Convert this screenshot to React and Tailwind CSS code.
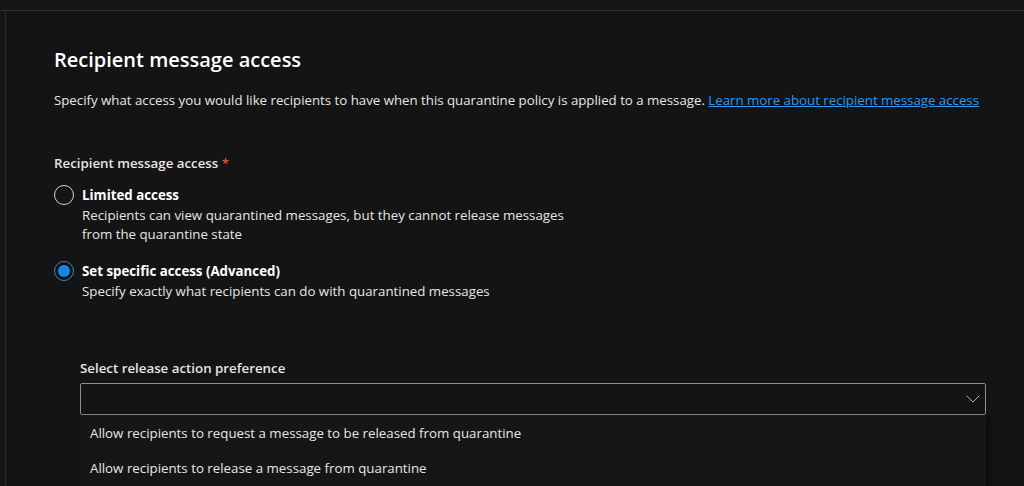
import { ChevronDown } from "lucide-react";

const font = { fontFamily: '"Segoe UI", "Open Sans", "Noto Sans", sans-serif' };

const Radio = ({ checked }) => (
  <span
    className={`mt-[1px] flex h-5 w-5 shrink-0 items-center justify-center rounded-full border ${
      checked ? "border-[#2b88d8]" : "border-[#d6d6d6]"
    }`}
  >
    {checked && <span className="h-[12px] w-[12px] rounded-full bg-[#1a86e0]" />}
  </span>
);

const Option = ({ checked, title, children }) => (
  <div className="flex gap-2">
    <Radio checked={checked} />
    <div>
      <div className="text-[13.3px] font-bold leading-[22px] text-white">{title}</div>
      <div className="text-[13.3px] leading-[19px] text-[#e6e6e6]">{children}</div>
    </div>
  </div>
);

export default function App() {
  return (
    <div
      className="h-[486px] w-[1024px] overflow-hidden bg-[#141414] text-white"
      style={font}
    >
      <div className="h-[11px] border-b border-[#2e2e2e] bg-[#151515]" />
      <div className="flex h-full">
        <div className="ml-[5px] w-px bg-[#2a2a2a]" />
        <div className="flex-1 pl-[48px] pr-[38px] pt-[35px]">
          <h1 className="text-[20px] font-semibold leading-[28px]">Recipient message access</h1>
          <p className="mt-[16px] whitespace-nowrap text-[13.25px] leading-[20px] text-[#e6e6e6]">
            Specify what access you would like recipients to have when this quarantine policy is
            applied to a message.{" "}
            <a href="#" className="text-[#2899f5] underline">
              Learn more about recipient message access
            </a>
          </p>

          <div className="mt-[43px] text-[13.3px] font-semibold leading-[20px] text-[#e6e6e6]">
            Recipient message access <span className="text-[#e5533d]">*</span>
          </div>

          <div className="mt-[11px] flex flex-col gap-[16px]">
            <Option checked={false} title="Limited access">
              Recipients can view quarantined messages, but they cannot release messages
              <br />
              from the quarantine state
            </Option>
            <Option checked title="Set specific access (Advanced)">
              Specify exactly what recipients can do with quarantined messages
            </Option>
          </div>

          <div className="ml-[26px] mt-[57px]">
            <div className="text-[13.3px] font-semibold leading-[20px] text-[#e6e6e6]">
              Select release action preference
            </div>
            <div className="mt-[5px] flex h-[32px] items-center justify-end rounded-[2px] border border-[#8f8f8f]">
              <ChevronDown size={24} strokeWidth={1} className="text-[#8fb4d6]" />
            </div>
            <div className="bg-[#161616] pt-[1px] shadow-[2px_2px_6px_rgba(0,0,0,0.6)]">
              <div className="flex h-[35px] items-center px-[10px] text-[13.3px] text-[#e6e6e6]">
                Allow recipients to request a message to be released from quarantine
              </div>
              <div className="flex h-[35px] items-center px-[10px] text-[13.3px] text-[#e6e6e6]">
                Allow recipients to release a message from quarantine
              </div>
            </div>
          </div>
        </div>
      </div>
    </div>
  );
}
